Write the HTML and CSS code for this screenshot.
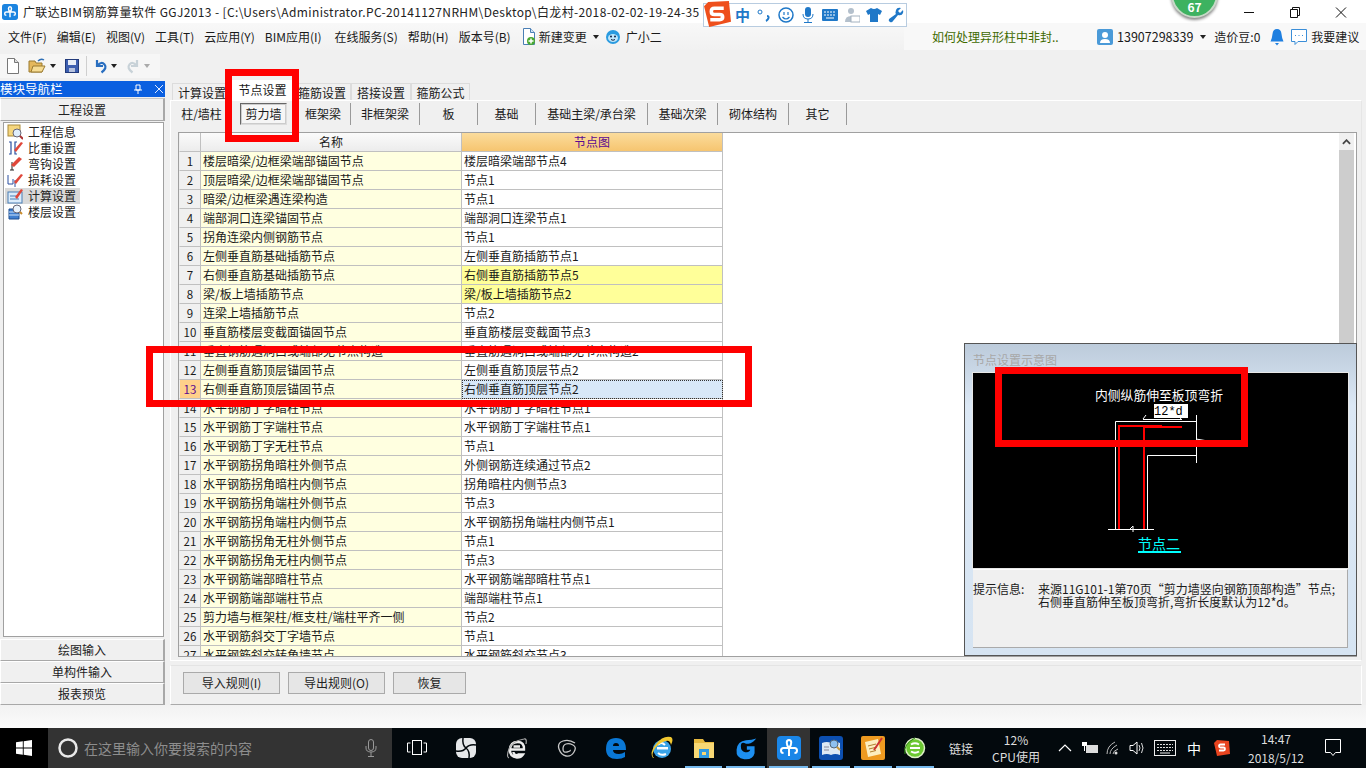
FILE: index.html
```html
<!DOCTYPE html>
<html lang="zh">
<head>
<meta charset="utf-8">
<title>广联达BIM钢筋算量软件 GGJ2013</title>
<link rel="stylesheet" href="styles.css">
</head>
<body>
<div class="app">
  <header class="titlebar">
    <svg class="applogo" viewBox="0 0 24 24"><rect width="24" height="24" rx="4" fill="#1b84e0"/><path d="M12 12C9 8.500 9 4 12 4s3 4.500 0 8M11 12H6.500a2.500 2.500 0 1 0 0 5M13 12h4.500a2.500 2.500 0 1 1 0 5M12 12v8" stroke="#fff" stroke-width="2.200" fill="none"/></svg>
    <span class="titletext">广联达BIM钢筋算量软件 GGJ2013 - [C:\Users\Administrator.PC-20141127NRHM\Desktop\白龙村-2018-02-02-19-24-35</span>
    <div class="winctl">
      <svg viewBox="0 0 46 22"><path d="M18 11.500h10" stroke="#111" fill="none"/></svg>
      <svg viewBox="0 0 46 22"><path d="M18.500 8.500h7v8h-7zM20.500 8.500v-2h7v8h-2" stroke="#111" fill="none"/></svg>
      <svg viewBox="0 0 46 22"><path d="M18 6.500l10 10M28 6.500l-10 10" stroke="#111" fill="none"/></svg>
    </div>
  </header>

  <nav class="menubar">
    <span class="m m1">文件(F)</span><span class="m">编辑(E)</span><span class="m">视图(V)</span><span class="m">工具(T)</span><span class="m">云应用(Y)</span><span class="m m6">BIM应用(I)</span><span class="m">在线服务(S)</span><span class="m">帮助(H)</span><span class="m">版本号(B)</span>
    <svg class="ic16" viewBox="0 0 16 18"><path d="M2.500.500h7l4 4v12h-11z" fill="#fff" stroke="#4a7fb5"/><path d="M9.500.500v4h4" fill="#cfe2f5" stroke="#4a7fb5"/><circle cx="10" cy="13" r="4" fill="#4aa832"/><path d="M10 10.500v5M7.500 13h5" stroke="#fff" stroke-width="1.500"/></svg>
    <span class="m new">新建变更</span><i class="caret capt"></i>
    <svg class="ic16 guang" viewBox="0 0 16 16"><circle cx="8" cy="8" r="7" fill="#2a9be0"/><ellipse cx="8" cy="9" rx="5" ry="4" fill="#bfe6fb"/><circle cx="6" cy="7.500" r="1" fill="#124"/><circle cx="10" cy="7.500" r="1" fill="#124"/><path d="M6 10.500q2 1.500 4 0" stroke="#124" fill="none"/></svg>
    <span class="m gx">广小二</span>
    <div class="menuright">
      <span class="hint">如何处理异形柱中非封..</span>
      <div class="account">
        <svg class="ic16" viewBox="0 0 16 16"><rect width="16" height="16" rx="2" fill="#4a9ad8"/><circle cx="8" cy="6" r="3" fill="#fff"/><path d="M3 14q0-4 5-4t5 4z" fill="#fff"/></svg>
        <span class="phone">13907298339</span><i class="caret caph"></i><span class="bean">造价豆:0</span>
        <svg class="bell" viewBox="0 0 14 18"><path d="M7 1q4 0 4.500 5t2 7.500H.500q1.500-2.500 2-7.500T7 1z" fill="#1e7fe0"/><path d="M5 15h4l-2 2.500z" fill="#1e7fe0"/></svg>
        <svg class="ic16 chat" viewBox="0 0 16 18"><path d="M.500.500h15v12H7l-3 3v-3H.500z" fill="#fff" stroke="#3b8ed8"/><path d="M4 6.500h1M7.500 6.500h1M11 6.500h1" stroke="#3b8ed8"/></svg>
        <span>我要建议</span>
      </div>
    </div>
  </nav>

  <div class="toolbar">
    <div class="tools">
      <svg class="tb first" viewBox="0 0 14 16"><path d="M1.500.500h7l4 4v11h-11z" fill="#fff" stroke="#777"/><path d="M8.500.500v4h4" fill="#ddd" stroke="#777"/></svg>
      <svg class="tb open" viewBox="0 0 18 16"><path d="M1 3h6l1 2h6v9H1z" fill="#e5b85c" stroke="#9a7a30"/><path d="M3 14l2-6h12l-3 6z" fill="#f6dc94" stroke="#9a7a30"/><path d="M10 3q3-3 6-1" stroke="#2e6fb5" fill="none" stroke-width="1.500"/></svg>
      <i class="caret capd"></i>
      <svg class="tb save" viewBox="0 0 14 16"><rect x=".5" y="1.500" width="13" height="13" fill="#3d5fb0" stroke="#223a7a"/><rect x="3" y="2" width="8" height="5" fill="#e8eef8"/><rect x="4" y="10" width="6" height="4" fill="#b6c2de"/></svg>
      <span class="tbsep"></span>
      <svg class="tb undo" viewBox="0 0 14 16"><path d="M3 2v6h6M3.500 7.500q4-4.500 7-1t-3 8" stroke="#2a6fc0" stroke-width="2.200" fill="none"/></svg>
      <i class="caret capd cu"></i>
      <svg class="tb redo" viewBox="0 0 14 16"><path d="M11 2v6H5M10.500 7.500q-4-4.500-7-1t3 8" stroke="#c8d2d8" stroke-width="2.200" fill="none"/></svg>
      <i class="caret capd cr"></i>
    </div>
  </div>

  <div class="workspace">
    <aside class="nav">
      <div class="navhead"><span>模块导航栏</span>
        <svg class="pin" viewBox="0 0 10 10"><path d="M3 1h4v5H3zM1 6h8M5 6v4" stroke="#fff" fill="none"/></svg>
        <svg class="navx" viewBox="0 0 10 10"><path d="M1 1l8 8M9 1l-8 8" stroke="#dfeaff" fill="none"/></svg>
      </div>
      <div class="navbtn top">工程设置</div>
      <ul class="tree">
        <li><svg viewBox="0 0 16 16"><rect x="1" y="1" width="12" height="11" fill="#f5d67e" stroke="#a98a3a"/><circle cx="10" cy="9" r="4" fill="#dfeefc" stroke="#667"/><path d="M13 12l3 3" stroke="#a33" stroke-width="2"/></svg>工程信息</li>
        <li><svg viewBox="0 0 16 16"><path d="M2 2h2v12H2M10 14h-2V2h2" stroke="#2a4fa0" fill="none" stroke-width="1.200"/><path d="M7 10l7-8 2 1-7 9z" fill="#e0473a"/></svg>比重设置</li>
        <li><svg viewBox="0 0 16 16"><path d="M5 6v8M3 14h4" stroke="#222" fill="none"/><path d="M4 9l8-8 3 2-8 8z" fill="#e0473a"/></svg>弯钩设置</li>
        <li><svg viewBox="0 0 16 16"><path d="M1 3v9h5V7M8 15V8" stroke="#2a4fa0" fill="none"/><path d="M7 10l7-8 2 1-7 9z" fill="#e0473a"/></svg>损耗设置</li>
        <li class="sel"><svg viewBox="0 0 16 16"><rect x="1" y="4" width="14" height="11" fill="#dcecfb" stroke="#4a7fb5"/><path d="M3 8h7M3 11h9" stroke="#4a7fb5"/><path d="M8 9l6-8 2 1-6 9z" fill="#e0473a"/></svg>计算设置</li>
        <li><svg viewBox="0 0 16 16"><path d="M2 5h10v10H2z" fill="#3f7fd0" stroke="#1f4f90"/><path d="M2 8h10M2 11h10" stroke="#cfe4fa"/><circle cx="10" cy="5" r="4" fill="#eaf3fc" stroke="#667"/><path d="M13 8l2 2" stroke="#c88a2a" stroke-width="2"/></svg>楼层设置</li>
      </ul>
      <div class="navbtn">绘图输入</div>
      <div class="navbtn">单构件输入</div>
      <div class="navbtn">报表预览</div>
    </aside>

    <main class="main">
      <div class="tabs">
        <span class="tab t1">计算设置</span><span class="tab t2 on">节点设置</span><span class="tab t3">箍筋设置</span><span class="tab t4">搭接设置</span><span class="tab t5">箍筋公式</span>
      </div>
      <section class="panel">
        <div class="subtabs">
          <span>柱/墙柱</span><span class="cur"><b>剪力墙</b></span><span>框架梁</span><span>非框架梁</span><span>板</span><span>基础</span><span>基础主梁/承台梁</span><span>基础次梁</span><span>砌体结构</span><span>其它</span>
        </div>
        <div class="gridbox">
          <div class="sheet">
            <div class="h n"></div><div class="h">名称</div><div class="h o">节点图</div>
            <div class="n">1</div><div class="a">楼层暗梁/边框梁端部锚固节点</div><div>楼层暗梁端部节点4</div>
            <div class="n">2</div><div class="a">顶层暗梁/边框梁端部锚固节点</div><div>节点1</div>
            <div class="n">3</div><div class="a">暗梁/边框梁遇连梁构造</div><div>节点1</div>
            <div class="n">4</div><div class="a">端部洞口连梁锚固节点</div><div>端部洞口连梁节点1</div>
            <div class="n">5</div><div class="a">拐角连梁内侧钢筋节点</div><div>节点1</div>
            <div class="n">6</div><div class="a">左侧垂直筋基础插筋节点</div><div>左侧垂直筋插筋节点1</div>
            <div class="n">7</div><div class="a">右侧垂直筋基础插筋节点</div><div class="y">右侧垂直筋插筋节点5</div>
            <div class="n">8</div><div class="a">梁/板上墙插筋节点</div><div class="y">梁/板上墙插筋节点2</div>
            <div class="n">9</div><div class="a">连梁上墙插筋节点</div><div>节点2</div>
            <div class="n">10</div><div class="a">垂直筋楼层变截面锚固节点</div><div>垂直筋楼层变截面节点3</div>
            <div class="n">11</div><div class="a">垂直钢筋遇洞口或端部无节点构造</div><div>垂直筋遇洞口或端部无节点构造2</div>
            <div class="n">12</div><div class="a">左侧垂直筋顶层锚固节点</div><div>左侧垂直筋顶层节点2</div>
            <div class="n act">13</div><div class="a">右侧垂直筋顶层锚固节点</div><div class="s">右侧垂直筋顶层节点2</div>
            <div class="n">14</div><div class="a">水平钢筋丁字暗柱节点</div><div>水平钢筋丁字暗柱节点1</div>
            <div class="n">15</div><div class="a">水平钢筋丁字端柱节点</div><div>水平钢筋丁字端柱节点1</div>
            <div class="n">16</div><div class="a">水平钢筋丁字无柱节点</div><div>节点1</div>
            <div class="n">17</div><div class="a">水平钢筋拐角暗柱外侧节点</div><div>外侧钢筋连续通过节点2</div>
            <div class="n">18</div><div class="a">水平钢筋拐角暗柱内侧节点</div><div>拐角暗柱内侧节点3</div>
            <div class="n">19</div><div class="a">水平钢筋拐角端柱外侧节点</div><div>节点3</div>
            <div class="n">20</div><div class="a">水平钢筋拐角端柱内侧节点</div><div>水平钢筋拐角端柱内侧节点1</div>
            <div class="n">21</div><div class="a">水平钢筋拐角无柱外侧节点</div><div>节点1</div>
            <div class="n">22</div><div class="a">水平钢筋拐角无柱内侧节点</div><div>节点3</div>
            <div class="n">23</div><div class="a">水平钢筋端部暗柱节点</div><div>水平钢筋端部暗柱节点1</div>
            <div class="n">24</div><div class="a">水平钢筋端部端柱节点</div><div>端部端柱节点1</div>
            <div class="n">25</div><div class="a">剪力墙与框架柱/框支柱/端柱平齐一侧</div><div>节点2</div>
            <div class="n">26</div><div class="a">水平钢筋斜交丁字墙节点</div><div>节点1</div>
            <div class="n">27</div><div class="a">水平钢筋斜交转角墙节点</div><div>水平钢筋斜交节点3</div>
          </div>
          <div class="scroll"><span class="up"><svg viewBox="0 0 10 6"><path d="M1 5l4-4 4 4" stroke="#444" stroke-width="2" fill="none"/></svg></span></div>
        </div>
      </section>
      <div class="btnpanel">
        <button class="btn b1">导入规则(I)</button><button class="btn b1">导出规则(O)</button><button class="btn b2">恢复</button>
      </div>
    </main>
  </div>
  <div class="strip"></div>

  <footer class="taskbar">
    <div class="start"><svg viewBox="0 0 16 16"><path d="M0 2.300l6.800-1v6.300H0zM7.700 1.200L16 0v7.600H7.700zM0 8.500h6.800v6.200L0 13.700zM7.700 8.500H16V16l-8.300-1.200z" fill="#fff"/></svg></div>
    <div class="search">
      <svg class="ring" viewBox="0 0 20 20"><circle cx="10" cy="10" r="8.500" fill="none" stroke="#e8e8e8" stroke-width="2.500"/></svg>
      <span class="ph">在这里输入你要搜索的内容</span>
      <svg class="mic" viewBox="0 0 12 18"><rect x="3.500" y=".5" width="5" height="11" rx="2.500" fill="none" stroke="#999"/><path d="M1 7v2q0 4 5 4t5-4V7M6 13v4M3 17.500h6" stroke="#999" fill="none"/></svg>
    </div>
    <div class="apps">
      <span><svg class="a20" viewBox="0 0 20 20"><rect x="5.500" y="2.500" width="9" height="14" fill="none" stroke="#fff"/><path d="M3.500 5H.5v9h3M16.500 5h3v9h-3" stroke="#fff" fill="none"/></svg></span>
      <span><svg class="a22" viewBox="0 0 22 22"><rect x="1" y="1" width="20" height="20" rx="6" fill="#e6e8ea"/><path d="M11 11Q7 8 8 1M11 11q3-4 10-3M11 11q4 3 3 10M11 11q-3 4-10 3" stroke="#03090d" stroke-width="1.500" fill="none"/></svg></span>
      <span><svg class="a22" viewBox="0 0 22 22"><path d="M4 12.500h14q.5-7.500-6.500-7.500T4 12.500t7 8q4 0 6-3h-4.500q-2 1.500-4 0-1-1-1-2.500M7.500 9.500h6.500" fill="none" stroke="#eee" stroke-width="2.400"/><path d="M3 21Q0 20 3 12T18 2q3-1 2 5" fill="none" stroke="#aaa" stroke-width="1.200"/></svg></span>
      <span><svg class="a20" viewBox="0 0 20 20"><path d="M18 5Q12 1 6 3T2 11t7 7 8-4-1-7-7-1-3 5 4 3 3-2" fill="none" stroke="#c8c8c8" stroke-width="1.300"/></svg></span>
      <span><svg class="a24" viewBox="0 0 24 24"><path d="M2 13Q2 2 12 2t10 12H9q0 4 6 4 3 0 6-2v5q-3 2-8 2Q2 23 2 13zM9 10h6q0-3-3-3T9 10z" fill="#0a78d6"/></svg></span>
      <span><svg class="a24" viewBox="0 0 24 24"><circle cx="12" cy="13" r="9" fill="#3aa3e8"/><rect x="7" y="11" width="11" height="2.500" fill="#fff"/><path d="M8 9q3-4 7 0M8 17q3 3 8 1" stroke="#fff" stroke-width="2" fill="none"/><path d="M3 22Q-1 17 6 8T21 1q3 2 0 8-1-5-5-4Q8 7 4 14q-3 5 0 8z" fill="#f2c830"/></svg></span>
      <span><svg class="a24" viewBox="0 0 24 24"><path d="M2 3h9l2 3h9v16H2z" fill="#e7b93f"/><rect x="2" y="7" width="20" height="15" fill="#f8d874"/><rect x="7" y="13" width="10" height="9" fill="#2f9ae0"/><rect x="10" y="16" width="4" height="3" fill="#f8d874"/></svg></span>
      <span><svg class="a24" viewBox="0 0 24 28"><path d="M24 3q-5 2-12 2Q2 6 1 16t9 11 12-7v-8h-9v4h4q-1 3-6 3-5-1-5-7T12 9q6 0 9-3z" fill="#1d8ff0"/></svg></span>
      <span class="running"><svg class="a24" viewBox="0 0 24 24"><rect width="24" height="24" rx="4" fill="#1a86e8"/><path d="M12 12C9 8.500 9 4 12 4s3 4.500 0 8M11 12H6.500a2.500 2.500 0 1 0 0 5M13 12h4.500a2.500 2.500 0 1 1 0 5M12 12v8" stroke="#fff" stroke-width="2" fill="none"/></svg></span>
      <span><svg class="a24" viewBox="0 0 24 24"><rect width="24" height="24" rx="3" fill="#0c4fb0"/><path d="M3 7q5-2 9 0 4-2 9 0v12q-5-2-9 0-4-2-9 0z" fill="#dce8f4"/><circle cx="15" cy="8" r="4" fill="#8fc0ef" stroke="#567"/><path d="M18 11l3 3" stroke="#c9973a" stroke-width="2"/><path d="M5 11h5M5 14h5" stroke="#889"/></svg></span>
      <span><svg class="a24" viewBox="0 0 24 24"><rect width="24" height="24" rx="2" fill="#ee9a20"/><path d="M4 6l13-3 3 15-13 3z" fill="#fdeec0"/><path d="M7 10l8-2M8 13l8-2M9 16l6-1.500" stroke="#b08030"/><path d="M13 14l8-12" stroke="#c33" stroke-width="2"/></svg></span>
      <span><svg class="a24" viewBox="0 0 24 24"><circle cx="12" cy="12" r="9.500" fill="#6cc832" stroke="#dff0c8" stroke-width="1.500"/><path d="M7 12h10M8 8.500q4-2.500 8 0M8 15.500q4 2.500 8 0" stroke="#fff" stroke-width="2" fill="none"/><path d="M2 18Q0 8 12 2" stroke="#2e8a10" fill="none"/></svg></span>
    </div>
    <div class="tray">
      <span class="tx">链接</span>
      <span class="tx cpu">12%<br>CPU使用</span>
      <span class="ti w26"><svg class="a14" viewBox="0 0 14 14"><path d="M1 10l6-6 6 6" stroke="#fff" fill="none" stroke-width="1.200"/></svg></span>
      <span class="ti w24"><svg class="a18" viewBox="0 0 18 16"><rect x="5" y="5" width="12" height="8" fill="#ddd"/><rect x="1" y="2" width="5" height="4" fill="#fff"/><path d="M3.500 6v5" stroke="#fff"/></svg></span>
      <span class="ti w24"><svg class="a18" viewBox="0 0 18 16"><path d="M2 14Q2 6 10 2M5 14q0-5 7-9M8 14q0-3 5-5" stroke="#bbb" fill="none"/><circle cx="11" cy="13" r="1.500" fill="#ddd"/></svg></span>
      <span class="ti w22"><svg class="a18" viewBox="0 0 18 16"><path d="M2 5.500h3l4-3.500v12l-4-3.500H2z" fill="none" stroke="#fff"/><path d="M11 5q2 3 0 6M13.500 3q3 5 0 10" stroke="#ddd" fill="none"/></svg></span>
      <span class="ti w34"><svg class="a22h" viewBox="0 0 22 16"><rect x=".5" y=".5" width="21" height="15" fill="none" stroke="#eee"/><path d="M3 4.500h16M3 7.500h16M3 10.500h16" stroke="#ddd" stroke-dasharray="2 1"/><path d="M6 13h10" stroke="#eee"/></svg></span>
      <span class="ti w24 zh">中</span>
      <span class="ti w32"><svg class="a18" viewBox="0 0 18 18"><path d="M4 1l12 1 1 13-13 2-3-13z" fill="#e8441f"/><path d="M12 5.500H7.500Q6 5.500 6 7t1.500 1.500h3q1.500 0 1.500 1.500t-1.500 1.500H6" stroke="#fff" stroke-width="1.800" fill="none"/></svg></span>
      <span class="tx clock">14:47<br>2018/5/12</span>
      <span class="ti w38"><svg class="a18" viewBox="0 0 16 18"><path d="M.5.500h15v13h-5l-2.500 3-2.500-3h-5z" fill="none" stroke="#fff"/></svg></span>
    </div>
  </footer>
</div>

<div class="ball"><span>67</span></div>

<div class="sogou">
  <svg class="slogo" viewBox="0 0 27 27"><path d="M5 2l20-1 2 20-21 5-5-20z" fill="#ee4f1c"/><path d="M20 8h-9q-3 0-3 3t3 3h5q3 0 3 2.500T16 19H7" stroke="#fff" stroke-width="3.400" fill="none"/></svg>
  <span class="szh">中</span>
  <svg class="s16" viewBox="0 0 16 16"><circle cx="4" cy="5" r="2" fill="none" stroke="#1f78c8"/><path d="M11 9q2 0 1.500 2T10 14" stroke="#1f78c8" stroke-width="2" fill="none"/></svg>
  <svg class="s16" viewBox="0 0 16 16"><circle cx="8" cy="8" r="7" fill="none" stroke="#1f78c8" stroke-width="1.500"/><path d="M6 5v3M10 5v3M4.500 10q3.500 4 7 0" stroke="#1f78c8" fill="none" stroke-width="1.200"/></svg>
  <svg class="s16" viewBox="0 0 16 16"><rect x="5" y="0" width="6" height="10" rx="3" fill="#1f78c8"/><path d="M3 7q0 5 5 5t5-5M8 12v3M4 15.500h8" stroke="#1f78c8" fill="none"/></svg>
  <svg class="s16" viewBox="0 0 16 16"><rect y="2" width="16" height="12" rx="1" fill="#1f78c8"/><path d="M2 5h12M2 8h12" stroke="#fff" stroke-dasharray="2 1"/><path d="M4 11h8" stroke="#fff"/></svg>
  <svg class="s16" viewBox="0 0 16 16"><circle cx="7" cy="4" r="3" fill="#b4c0cc"/><path d="M1 15q0-6 6-6l2 1v5z" fill="#b4c0cc"/><rect x="7" y="9" width="9" height="6" fill="#fff" stroke="#a4b2c0"/></svg>
  <svg class="s16" viewBox="0 0 16 16"><path d="M5 1L0 4l2 4 2-1v8h8V7l2 1 2-4-5-3q-3 2-6 0z" fill="#1f78c8"/></svg>
  <svg class="s16" viewBox="0 0 16 16"><path d="M15 3l-3 3-2-2 3-3q-4-1-5 2t0 4L1 12q-1 2 1 3t3-1l5-6q4 1 5-2 .5-1 0-3z" fill="#1f78c8"/></svg>
</div>

<div class="floatpanel">
  <div class="floattitle">节点设置示意图</div>
  <svg class="canvas" viewBox="0 0 375 195">
    <g stroke="#fff" fill="none">
      <path d="M142.500 156V48.500H223M223.500 42V90M174.500 156V82.500H223M135 156.500h46M170 46.500h39"/>
      <path d="M170 46l3-4M208 46l-3-4M223 66l12 2-12 2M157 156l3-3v6"/>
    </g>
    <g stroke="#f00" fill="none" stroke-width="2">
      <path d="M146 156V53H189M171 156V54H209"/>
    </g>
    <rect x="181" y="31" width="34" height="14" fill="#fff"/>
    <text x="181" y="42" class="dim">12*d</text>
    <text x="122" y="27" class="cap">内侧纵筋伸至板顶弯折</text>
    <text x="165" y="176" class="node">节点二</text>
    <rect x="165" y="178" width="43" height="2" fill="#0ff"/>
  </svg>
  <div class="info">
    <span class="lbl">提示信息:</span>
    <p>来源11G101-1第70页“剪力墙竖向钢筋顶部构造”节点;<br>右侧垂直筋伸至板顶弯折,弯折长度默认为12*d。</p>
  </div>
</div>

<div class="mark m-a"></div>
<div class="mark m-b"></div>
<div class="mark m-c"></div>
</body>
</html>
```
FILE: styles.css
```css
*{box-sizing:border-box}
html,body{margin:0;padding:0;width:1366px;height:768px;overflow:hidden}
body{font:12px/16px "Noto Sans CJK SC","Liberation Sans",sans-serif;color:#1a1a1a;background:#f0f0f0;position:relative}
svg{display:block;flex:none}
.app{display:flex;flex-direction:column;height:768px}

.titlebar{height:23px;background:#fff;display:flex;align-items:center;padding-left:2px;position:relative}
.applogo{width:16px;height:16px}
.titletext{margin-left:5px;white-space:nowrap;font-size:12px;color:#222;letter-spacing:.37px}
.winctl{margin-left:auto;display:flex;padding-right:2px}
.winctl svg{width:46px;height:22px}

.menubar{height:27px;background:linear-gradient(#f8f8f8,#f1f1f1);display:flex;align-items:center;padding-left:8px}
.m{margin-right:10px;white-space:nowrap}
.m6{margin-right:13px}
.ic16{width:16px;height:18px}
.new{margin-left:2px;margin-right:0}
.caret{display:block;width:0;height:0;border:3px solid transparent;border-top:4px solid #222;border-bottom:0;flex:none}
.capt{margin-left:6px;margin-right:6px}
.guang{margin:0 5px 0 0}
.gx{margin-right:0}
.menuright{margin-left:auto;display:flex;align-items:center;height:27px}
.hint{width:186px;height:27px;background:#f8f8f8;color:#3f6a00;line-height:28px;padding-left:28px;white-space:nowrap}
.account{width:276px;height:27px;display:flex;align-items:center;padding-left:7px;background:#f8f8f8;white-space:nowrap}
.phone{margin-left:4px;font-size:12.500px}
.caph{margin:0 8px 0 7px}
.bell{width:14px;height:18px;margin:0 7px 0 10px}
.chat{margin:2px 4px 0 0}

.toolbar{height:30px;display:flex;align-items:center}
.tools{width:160px;height:24px;background:#f6f6f6;display:flex;align-items:center;margin-top:2px}
.tb{height:16px}
.first{width:14px;margin-left:6px}
.open{width:18px;margin-left:8px}
.capd{margin-left:4px}
.save{width:14px;margin-left:9px}
.tbsep{width:1px;height:20px;background:#cfcfcf;margin-left:7px}
.undo{width:14px;margin-left:7px}
.cu{margin-left:3px}
.redo{width:14px;margin-left:9px}
.cr{margin-left:4px;border-top-color:#aaa}

.workspace{height:625px;display:flex}
.nav{width:165px;padding-top:1px;display:flex;flex-direction:column}
.navhead{height:16px;background:#0a5fe0;color:#fff;font-size:12.500px;line-height:16px;display:flex;align-items:center;margin-bottom:1px;white-space:nowrap}
.pin{width:10px;height:10px;margin-left:70px}
.navx{width:10px;height:10px;margin-left:11px}
.navbtn{height:22px;background:#f0f0f0;border:1px solid #a8a8a8;border-top-color:#fff;border-left-color:#fff;border-right-width:2px;text-align:center;line-height:20px;color:#222}
.top{height:23px;border-top-color:#c8c8c8;line-height:21px}
.tree{list-style:none;margin:1px 1px 2px 3px;padding:1px 0 0 1px;height:516px;background:#fff;border:1px solid #a0a0a0}
.tree li{height:16px;display:flex;align-items:center;gap:3px;padding-left:1px;width:75px;white-space:nowrap;color:#222}
.tree svg{width:16px;height:16px;margin-left:1px;margin-right:2px}
.tree .sel{background:#d9d9d9}

.main{width:1192px;margin-left:5px;display:flex;flex-direction:column}
.tabs{height:20px;display:flex;align-items:flex-end;padding-left:2px}
.tab{height:17px;background:#f0f0f0;border:1px solid #dcdcdc;border-bottom:0;text-align:center;line-height:17px;white-space:nowrap}
.t1{width:60px}.t2{width:61px}.t3{width:58px}.t4{width:60px}.t5{width:59px}
.on{height:20px;background:#fff;border:0;line-height:19px}
.panel{height:561px;background:#f0f0f0;border:1px solid #fff;border-right:1px solid #e6e6e6;padding:2px 0 0 1px}
.subtabs{height:22px;display:grid;grid-template-columns:60px 64px 55px 69px 58px 58px 112px 70px 71px 58px;justify-content:start;align-items:center}
.subtabs span{height:22px;line-height:22px;text-align:center;border-right:1px solid #9a9a9a;white-space:nowrap}
.cur{padding:0 8px}
.cur b{display:block;font-weight:400;height:22px;line-height:20px;background:#f6f6f6;border:1px solid;border-color:#666 #ddd #ddd #666;outline:1px solid #ccc;outline-offset:-2px}
.gridbox{margin:7px 0 0 6px;width:1179px;height:525px;background:#fff;border:1px solid #a0a0a0;display:flex;overflow:hidden;justify-content:space-between}
.sheet{display:grid;grid-template-columns:22px 261px 261px;grid-auto-rows:19px;width:544px;align-content:start}
.sheet>div{border-right:1px solid #c0c0c0;border-bottom:1px solid #c0c0c0;line-height:18px;padding-left:2px;white-space:nowrap;overflow:hidden;background:#fff}
.sheet>.n{background:#f0f0f0;text-align:center;padding:0;border-left:1px solid #eee;font-size:11.500px}
.sheet>.a{background:#ffffe0}
.sheet>.h{background:linear-gradient(#fbfbfb,#ececec);text-align:center;padding:0}
.sheet>.o{background:linear-gradient(#fbdc9c,#f6c570);color:#5a0a90}
.sheet>.y{background:#ffff99}
.sheet>.s{background:#d8e8f8;outline:1px dotted #333;outline-offset:-1px}
.sheet>.act{background:#ffd08a;color:#5a0a90}
.scroll{width:15px;height:100%;background:#cdcdcd;margin-right:2px}
.up{display:flex;height:17px;background:#f0f0f0;align-items:center;justify-content:center}
.up svg{width:9px;height:6px}
.btnpanel{height:40px;margin-top:4px;border:1px solid #fff;border-bottom:1px solid #aaa;border-top-color:#e4e4e4;padding:6px 0 0 12px;display:flex;gap:8px;width:1192px}
.btn{height:22px;font:12px/18px "Noto Sans CJK SC","Liberation Sans",sans-serif;background:#e6e6e6;border:1px solid #aaa;padding:0;color:#222}
.b1{width:97px}.b2{width:73px}
.strip{height:23px;background:linear-gradient(#f2f2f2,#fbfbfb)}

.taskbar{height:40px;background:#03090d;display:flex;color:#e8e8e8}
.start{width:48px;background:#000;display:flex;align-items:center;justify-content:center}
.start svg{width:16px;height:16px}
.search{width:344px;background:#333;display:flex;align-items:center;padding-left:10px}
.ring{width:20px;height:20px}
.ph{font-size:14px;color:#8d8d8d;margin-left:6px;white-space:nowrap}
.mic{width:12px;height:18px;margin-left:113px}
.apps{display:grid;grid-template-columns:49px 50px 51px 50px 48px 43px 41px 43px 43px 42px 42px 42px}
.apps span{display:flex;align-items:center;justify-content:center;position:relative}
.running{background:#333}
.apps span:nth-child(n+7)::after{content:"";position:absolute;left:2px;right:2px;bottom:0;height:2px;background:#76b9ed}
.apps .running::after{left:0;right:0}
.a20{width:20px;height:20px}.a22{width:22px;height:22px}.a24{width:24px;height:24px}
.tray{display:flex;align-items:center}
.tx{text-align:center;white-space:nowrap;line-height:17px;color:#ddd}
.tray>.tx:first-child{width:50px}
.cpu{width:60px;margin-right:6px}
.ti{display:flex;justify-content:center;align-items:center}
.w22{width:22px}.w24{width:24px}.w26{width:26px}.w32{width:32px}.w34{width:34px}.w38{width:38px}
.a14{width:14px;height:14px}.a18{width:18px;height:18px}.a22h{width:22px;height:16px}
.zh{font-size:14px;color:#fff}
.clock{width:76px;line-height:19px}

.ball{position:absolute;left:1171px;top:-29px;width:47px;height:47px;border-radius:50%;background:#3db260;border:2px solid #c8d8c8;box-shadow:0 2px 3px #888;color:#fff;font-weight:700;font-size:12px;text-align:center}
.ball span{position:absolute;left:0;right:0;top:26px}

.sogou{position:absolute;left:703px;top:3px;width:204px;height:24px;background:#fff;border:1px solid #b8cce0;display:flex;align-items:center;gap:6px;padding-left:31px}
.slogo{position:absolute;left:-1px;top:-4px;width:28px;height:28px}
.szh{font-size:15px;font-weight:700;color:#1f78c8;line-height:16px}
.s16{width:16px;height:16px}

.floatpanel{position:absolute;left:964px;top:343px;width:393px;height:313px;background:linear-gradient(#bccbdb,#dce8f5 20%,#d6e4f2);border:1px solid #555;padding:8px 8px 0}
.floattitle{color:#a8a8a8;height:21px;line-height:16px;white-space:nowrap}
.canvas{width:375px;height:195px;background:#000;outline:1px solid #e8e8e8}
.dim{font:12px "Liberation Mono",monospace;fill:#000}
.cap{font-size:12.800px;fill:#fff}
.node{font-size:14px;fill:#0ff}
.info{height:79px;margin-top:1px;background:#f0f0f0;border:1px solid #fff;border-left:0;border-right-color:#aaa;border-bottom-color:#aaa;display:flex;padding:12px 0 0 0;line-height:13px;white-space:nowrap}
.lbl{width:65px;flex:none}
.info p{margin:0}

.mark{position:absolute;border:7px solid #f00;pointer-events:none}
.m-a{left:225px;top:69px;width:74px;height:73px}
.m-b{left:146px;top:346px;width:606px;height:61px}
.m-c{left:995px;top:367px;width:253px;height:80px}
```
